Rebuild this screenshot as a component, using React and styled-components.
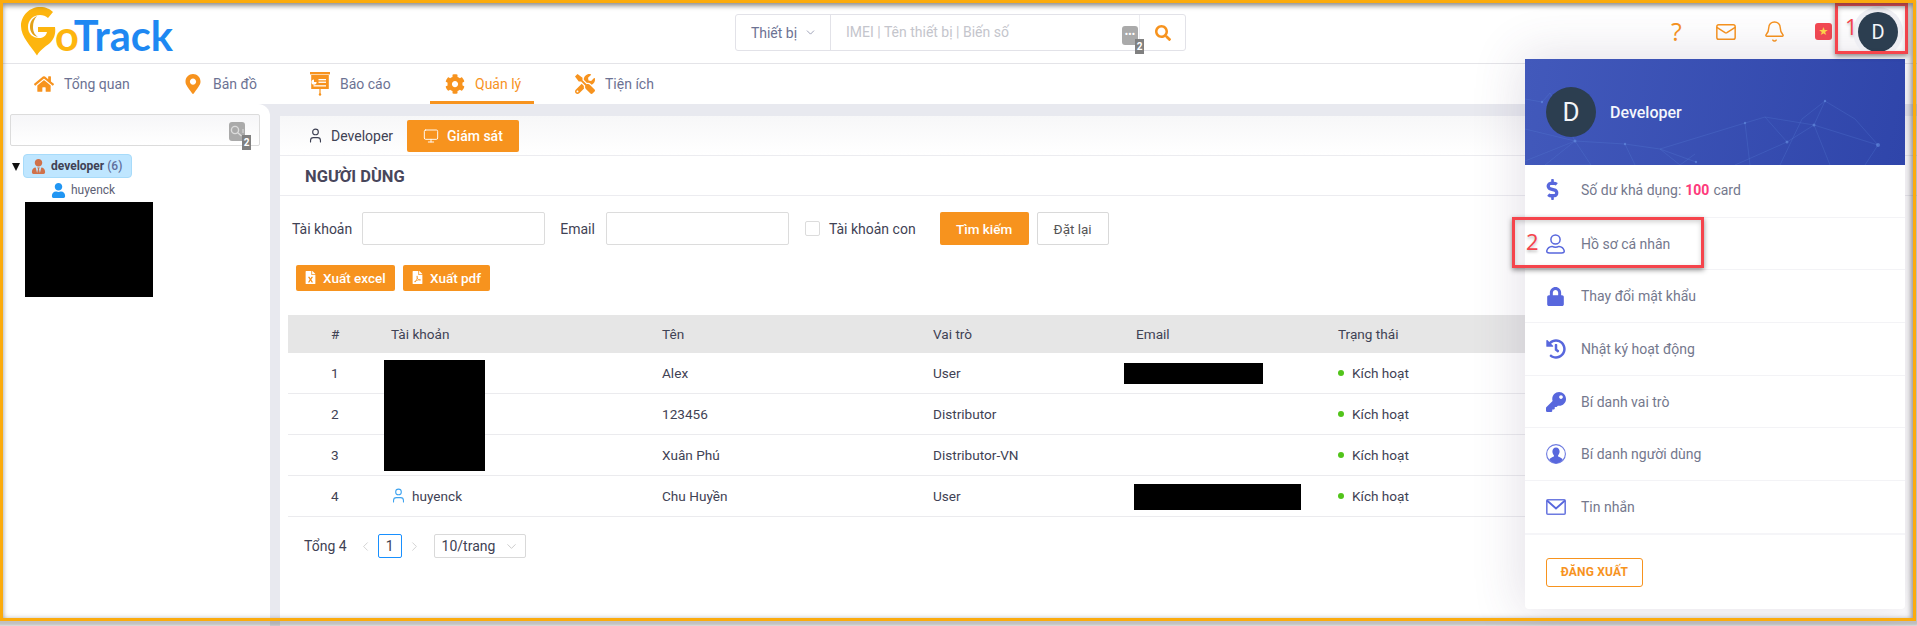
import React from "react";
import styled, { createGlobalStyle } from "styled-components";
import { FaHome, FaMapMarkerAlt, FaCog, FaTools, FaSearch, FaDollarSign, FaLock, FaHistory, FaKey, FaFileExcel, FaFilePdf, FaUser, FaUserTie } from "react-icons/fa";
import { Bell, ChevronDown, ChevronLeft, ChevronRight, Mail, Monitor, User } from "lucide-react";

const Global = createGlobalStyle`
  html, body { margin: 0; padding: 0; background: #fff; }
  * { box-sizing: border-box; }
  body { font-family: Roboto, "Liberation Sans", sans-serif; font-size: 13px; color: #3f4254; }
`;

const orange = "#f7931e";
const indigo = "#5867dd";

const Page = styled.div`
  position: relative; width: 1917px; height: 626px; overflow: hidden;
  display: flex; flex-direction: column; background: #fff;
`;
const Frame = styled.div`
  position: absolute; left: 0; top: 0; width: 1916px; height: 621px; z-index: 20; pointer-events: none;
  border: 3px solid #fbab0d;
  box-shadow: 0 2px 3px 3px rgba(90,90,90,.38), inset 0 3px 5px rgba(60,60,60,.5), inset -3px 0 5px rgba(60,60,60,.25);
`;
const Header = styled.header`
  height: 64px; flex: none; border-bottom: 1px solid #e4e4e8; padding: 3px 0 0 20px;
  display: flex; align-items: center; position: relative;
`;
const Logo = styled.div` width: 715px; display: flex; align-items: center; height: 50px; position: relative; margin-top: -3px; `;
const LogoPin = styled.svg` width: 37px; height: 49px; flex: none; margin-top: -1px; `;
const LogoText = styled.span`
  font-family: Lato, sans-serif; font-weight: 700; font-size: 41.5px; line-height: 1; margin: 8px 0 0 -2px; color: #1e88f2;
  & b { font-weight: 700; color: #fdb50e; }
`;
const SearchBar = styled.div`
  width: 451px; height: 37px; margin-top: -1px; border: 1px solid #e2e2e8; border-radius: 3px; display: flex; align-items: stretch;
`;
const SearchSelect = styled.div`
  width: 95px; border-right: 1px solid #e2e2e8; display: flex; align-items: center; justify-content: center; gap: 7px;
  color: #6c7293; font-size: 14px; padding-left: 2px;
`;
const SearchInput = styled.div`
  flex: 1; display: flex; align-items: center; padding: 0 0 2px 15px; color: #c4c5cc; font-size: 14px; position: relative; border-right: 1px solid #ececf0;
`;
const SearchBtn = styled.div` width: 45px; display: flex; align-items: center; justify-content: center; color: ${orange}; font-size: 16px; `;
const KbdIcon = styled.div`
  position: absolute; width: 16px; height: 19px; background: #aaa; border-radius: 3px; color: #fff;
  right: ${p => p.$right}px; top: ${p => p.$top}px; font-size: 9px; line-height: 17px; text-align: center; font-weight: 700; letter-spacing: .2px;
`;
const KbdBadge = styled.span`
  position: absolute; right: -6px; top: 13px; width: 9px; height: 15px; background: #808080; color: #fff; font-size: 10px; line-height: 15px; text-align: center; font-weight: 700; letter-spacing: 0;
`;
const TopIcons = styled.div`
  position: absolute; top: 0; left: 1652px; height: 63px; display: flex; align-items: center;
`;
const TopIcon = styled.div`
  width: 49px; display: flex; justify-content: center; align-items: center; color: ${orange};
  font-size: 24px; line-height: 1;
`;
const QuestionMark = styled.span` font-family: "Open Sans", sans-serif; font-size: 25px; color: ${orange}; `;
const Flag = styled.div`
  width: 17px; height: 17px; border-radius: 3px; background: #f44953; color: #ffd84a; font-size: 11px; line-height: 17px; text-align: center;
  font-family: "DejaVu Sans", sans-serif;
`;
const Avatar = styled.div`
  width: ${p => p.$size}px; height: ${p => p.$size}px; border-radius: 50%; background: #2c3e50; color: #f3f5f9; flex: none;
  display: flex; align-items: center; justify-content: center; font-size: ${p => p.$font}px; font-weight: 400;
`;
const TopAvatar = styled.div`
  position: absolute; left: 1853px; top: 7px; width: 50px; height: 50px; border-radius: 50%; background: #eeeef3;
  display: flex; align-items: center; justify-content: center; z-index: 6;
`;
const Nav = styled.nav`
  height: 40px; flex: none; display: flex; padding-left: 34px; align-items: stretch;
`;
const NavItem = styled.div`
  display: flex; align-items: center; gap: 10px; color: ${p => p.$active ? orange : "#6c7293"}; font-size: 14px;
  width: ${p => p.$w}px; position: relative; padding-left: ${p => p.$pl || 0}px;
  & svg { color: ${orange}; flex: none; }
  ${p => p.$active && `border-bottom: 3px solid ${orange}; padding-top: 3px;`}
`;
const Body = styled.div` flex: 1; display: flex; background: #e8e9ef; min-height: 0; `;
const Sidebar = styled.aside`
  width: 270px; flex: none; background: #fff; border-top-right-radius: 12px; padding: 10px 10px 0 10px; margin-right: 10px;
`;
const TreeSearch = styled.div`
  height: 32px; width: 250px; border: 1px solid #dcdcdc; border-radius: 2px; position: relative;
  background: linear-gradient(#f6f6f8, #fff);
`;
const TreeRoot = styled.div` display: flex; align-items: center; margin-top: 8px; `;
const Triangle = styled.div`
  width: 0; height: 0; border-left: 4.5px solid transparent; border-right: 4.5px solid transparent; border-top: 8px solid #111; margin: 1px 3px 0 2px;
`;
const RootNode = styled.div`
  width: 109px; height: 24px; background: #bfe6ff; border: 1px solid #a7dbfa; border-radius: 4px; display: flex; align-items: center; gap: 5px; padding-left: 7px;
  font-size: 12px; font-weight: 700; color: #3f4254; white-space: nowrap;
  & svg { color: #d0714a; flex: none; }
  & i { font-style: normal; font-weight: 500; color: #5f6f9c; }
`;
const TreeChild = styled.div`
  display: flex; align-items: center; gap: 5px; margin: 4px 0 0 41px; height: 16px; font-size: 12px; color: #5d5f75; & svg { color: #2196f3; }
`;
const Redact = styled.div`
  position: absolute; background: #000; left: ${p => p.$x}px; top: ${p => p.$y}px; width: ${p => p.$w}px; height: ${p => p.$h}px; z-index: 2;
`;
const Main = styled.main` flex: 1; margin-top: 12px; background: #fff; min-width: 0; `;
const Tabs = styled.div`
  height: 40px; display: flex; align-items: center; padding-left: 27px; border-bottom: 1px solid #ececf0;
  background: linear-gradient(#f7f7f8, #fff);
`;
const Tab = styled.div`
  display: flex; align-items: center; gap: ${p => p.$active ? 8 : 7}px; height: 32px; font-size: 14px; border-radius: 2px;
  color: ${p => p.$active ? "#fff" : "#3f4254"}; background: ${p => p.$active ? orange : "transparent"};
  padding: ${p => p.$active ? "0 16px" : "0 14px 0 0"};
  ${p => p.$active && "font-weight: 500;"}
`;
const Title = styled.div`
  height: 40px; display: flex; align-items: center; padding: 1px 0 0 25px; border-bottom: 1px solid #ececf0;
  font-size: 16.5px; font-weight: 700; color: #48465b;
`;
const Filters = styled.div` display: flex; align-items: center; padding: 16px 0 0 12px; height: 49px; `;
const FLabel = styled.span` font-size: 14px; color: #3f4254; margin-right: ${p => p.$mr}px; white-space: nowrap; `;
const FInput = styled.div` width: 183px; height: 33px; border: 1px solid #dcdcdc; border-radius: 2px; margin-right: ${p => p.$mr}px; `;
const Check = styled.div` width: 15px; height: 15px; border: 1px solid #dcdcdc; border-radius: 2px; margin-right: 9px; `;
const ActionBtn = styled.div`
  height: 33px; display: flex; align-items: center; justify-content: center; width: ${p => p.$w}px; margin-right: ${p => p.$mr || 0}px; border-radius: 2px; font-size: 13.5px; flex: none;
  ${p => p.$primary ? `background: ${orange}; color: #fff; font-weight: 500;` : "border: 1px solid #d9d9d9; color: #555;"}
`;
const Exports = styled.div` display: flex; gap: 8px; padding: 20px 0 0 16px; `;
const ExportBtn = styled.div`
  height: 26px; padding: 0 8px 1px; background: ${orange}; color: #fff; font-size: 13.5px; font-weight: 500; border-radius: 2px; display: flex; align-items: center; gap: 6px; width: ${p => p.$w}px;
  & svg { flex: none; }
`;
const TableWrap = styled.div` position: relative; margin: 24px 12px 0 8px; `;
const gridCols = "103px 271px 271px 203px 202px 1fr";
const Row = styled.div`
  display: grid; grid-template-columns: ${gridCols}; height: ${p => p.$head ? 38 : 41}px; align-items: center;
  font-size: 13.6px; color: #3f4254; padding-bottom: 1px;
  ${p => p.$head ? "background: #e6e6e6;" : "border-bottom: 1px solid #ebebee;"}
`;
const NumCell = styled.div` padding-left: 43px; `;
const UserCell = styled.div` display: flex; align-items: center; gap: 5px; margin-left: -1px; & svg { color: #3ea3ef; } `;
const Status = styled.div`
  display: flex; align-items: center; gap: 8px;
  &::before { content: ""; width: 6px; height: 6px; border-radius: 50%; background: #52c41a; }
`;
const Pager = styled.div` display: flex; align-items: center; height: 24px; padding-left: 24px; margin-top: 17px; font-size: 14px; color: #3f4254; `;
const Total = styled.span` margin-right: 11px; `;
const PageBtn = styled.div` width: 24px; height: 24px; border: 1px solid #1890ff; border-radius: 2px; display: flex; align-items: center; justify-content: center; margin: 0 5px; `;
const PerPage = styled.div`
  width: 92px; height: 24px; border: 1px solid #d9d9d9; border-radius: 2px; display: flex; align-items: center; justify-content: space-between; padding: 0 6px 0 7px; margin-left: 12px;
  & svg { color: #bbb; }
`;
const PagerArrow = styled.span` color: #c4c4c4; display: flex; `;

const Dropdown = styled.div`
  position: absolute; left: 1525px; top: 59px; width: 380px; height: 550px; background: #fff; border-radius: 0 0 4px 4px; z-index: 5;
  box-shadow: 0 0 50px 4px rgba(82,63,105,.16); display: flex; flex-direction: column;
`;
const DropHead = styled.div`
  height: 106px; flex: none; position: relative; overflow: hidden; display: flex; align-items: center; padding: 0 0 0 21px;
  background: linear-gradient(100deg, #4259bb, #2f45aa);
  color: #f4f6fc; font-size: 16px; font-weight: 500;
`;
const NetSvg = styled.svg` position: absolute; left: 0; bottom: 0; width: 380px; height: 106px; `;
const HeadContent = styled.div` position: relative; display: flex; align-items: center; gap: 14px; `;
const MenuItem = styled.div`
  height: 52.7px; flex: none; display: flex; align-items: center; padding: ${p => p.$first ? "0 0 2px 21px" : "0 0 0 21px"}; border-bottom: 1px solid #f3f3f6; color: #74788d; font-size: 14px;
  & strong { color: #fd397a; font-weight: 700; margin: 0 4px; }
`;
const MenuIcon = styled.div`
  width: 35px; flex: none; color: ${indigo}; display: flex; align-items: center;
  & > svg { margin-left: ${p => p.$shift ? -4 : 0}px; }
`;
const DropFoot = styled.div` border-top: 2px solid #f5f5f8; padding: 23px 0 0 21px; margin-top: -1px; `;
const Logout = styled.div`
  width: 97px; height: 29px; border: 1px solid ${orange}; border-radius: 3px; color: ${orange}; font-size: 12px; font-weight: 700;
  display: flex; align-items: center; justify-content: center; letter-spacing: .2px;
`;
const RedBox = styled.div`
  position: absolute; left: ${p => p.$x}px; top: ${p => p.$y}px; width: ${p => p.$w}px; height: ${p => p.$h}px; border: 3px solid #f5444c; z-index: 10; pointer-events: none;
  box-shadow: 0 2px 5px rgba(0,0,0,.45), inset 0 2px 5px rgba(0,0,0,.18);
`;
const RedNum = styled.span`
  position: absolute; left: ${p => p.$x}px; top: ${p => p.$y}px; color: #f5444c; font-size: 22px; line-height: 1; z-index: 11; font-family: "Open Sans", sans-serif;
  text-shadow: 0 2px 3px rgba(0,0,0,.25);
`;

const ReportIcon = () => (
  <svg width="20" height="24" viewBox="0 0 20 24" fill="#f7931e">
    <rect x="0" y="0" width="20" height="2.4" />
    <rect x="1.2" y="3" width="17.6" height="14" />
    <rect x="9.4" y="17" width="1.2" height="5" />
    <circle cx="10" cy="22.5" r="1.2" />
    <path d="M4 7.5a2.6 2.6 0 1 0 2.6 2.6H4z" fill="#fff" />
    <rect x="8.5" y="7" width="7.5" height="1.3" fill="#fff" />
    <rect x="8.5" y="9.6" width="7.5" height="1.3" fill="#fff" />
    <rect x="3.5" y="13.2" width="12.5" height="1.3" fill="#fff" />
  </svg>
);
const LogoMark = () => (
  <LogoPin viewBox="0 0 37 49">
    <path d="M17 48.5C11 39 1 30 1 19 1 8 10 0 20 0c6 0 10 2 13 5l-5 6c-2-2-5-3-8-3-7 0-12 5-12 12 0 7 5 11 11 11 4 0 7-2 8-6h-9v-5h17c1 7-1 12-5 16-5 4-10 7-13 12.5z" fill="#fdb50e" />
    <path d="M10 20c0-6 3-9 7-11-3 3-4 7-4 11 0 5 2 8 5 10-5-1-8-5-8-10z" fill="#e2a21a" />
  </LogoPin>
);
const Network = () => (
  <NetSvg viewBox="0 0 380 106" fill="none" stroke="#5d86dc" strokeOpacity=".4" strokeWidth=".6">
    <path d="M0 40 17 43 25 34 50 82 0 102M50 82 100 85 135 90 171 103M50 82 20 106 66 106 50 82M100 85 110 106M170 95 155 106 135 90 220 64 240 58 289 66 353 86 340 106M289 66 300 42 277 60 255 106M220 64 225 106M240 58 262 83 289 66 305 106M262 83 210 106M300 42 330 60 353 86M0 70 50 82" />
    <g fill="#6b96e6" fillOpacity=".55" stroke="none">
      <circle cx="50" cy="82" r="1.5" /><circle cx="100" cy="85" r="1.2" /><circle cx="171" cy="103" r="1.2" /><circle cx="220" cy="64" r="1.2" />
      <circle cx="262" cy="83" r="1.5" /><circle cx="289" cy="66" r="1.5" /><circle cx="353" cy="86" r="2" /><circle cx="300" cy="42" r="1.2" /><circle cx="17" cy="43" r="1.2" />
    </g>
  </NetSvg>
);
const FilledMail = () => (
  <svg width="20" height="16" viewBox="0 0 20 16" fill="none">
    <rect x="0.8" y="0.8" width="18.4" height="14.4" rx="1" stroke="#6d7ae0" strokeWidth="1.6" />
    <path d="M1 1.5 10 9.5 19 1.5" stroke="#5867dd" strokeWidth="1.8" />
  </svg>
);
const ProfileIcon = () => (
  <svg width="19" height="20" viewBox="0 0 19 20" fill="none" stroke="#5867dd" strokeWidth="1.5">
    <circle cx="9.5" cy="5.5" r="4.6" />
    <path d="M3.5 19h12c2.5 0 3-1 2.6-2.6C17.3 13.8 15 12.6 13 12.4c-2 1-5 1-7 0-2 .2-4.3 1.4-5.1 4C.5 18 1 19 3.5 19z" />
  </svg>
);
const UserRing = () => (
  <svg width="20" height="20" viewBox="0 0 20 20">
    <circle cx="10" cy="10" r="9.4" fill="none" stroke="#6d7ae0" strokeWidth="1.1" />
    <path d="M10 3.5c-2.3 0-3.6 1.9-3.6 4.1 0 1.5.6 2.9 1.5 3.7v1.1c-1.8.8-3.600 1.400-4.700 2.800C4.600 17.800 7.100 19.200 10 19.200s5.400-1.400 6.800-4c-1.100-1.400-2.900-2-4.700-2.800v-1.100c.9-.8 1.500-2.200 1.500-3.700 0-2.200-1.300-4.100-3.600-4.100z" fill="#5867dd" />
  </svg>
);
const TreeGlass = () => (
  <svg width="16" height="19" viewBox="0 0 16 19" fill="none" stroke="#dcdcdc" strokeWidth="1.4">
    <circle cx="6" cy="8" r="3.6" />
    <path d="M8.8 10.800 12.500 14" />
    <path d="M14 7v4" strokeWidth="1" />
  </svg>
);

const rows = [
  ["1", "", "Alex", "User"],
  ["2", "", "123456", "Distributor"],
  ["3", "", "Xuân Phú", "Distributor-VN"],
  ["4", "huyenck", "Chu Huyền", "User"],
];
const menu = [
  [<FaDollarSign size={21} />, <>Số dư khả dụng:<strong>100</strong>card</>],
  [<ProfileIcon />, "Hồ sơ cá nhân"],
  [<FaLock size={19} />, "Thay đổi mật khẩu"],
  [<FaHistory size={20} />, "Nhật ký hoạt động"],
  [<FaKey size={20} />, "Bí danh vai trò"],
  [<UserRing />, "Bí danh người dùng"],
  [<FilledMail />, "Tin nhắn"],
];

export default function App() {
  return (
    <Page>
      <Global />
      <Header>
        <Logo>
          <LogoMark />
          <LogoText><b>o</b>Track</LogoText>
        </Logo>
        <SearchBar>
          <SearchSelect>Thiết bị <ChevronDown size={13} strokeWidth={1.2} /></SearchSelect>
          <SearchInput>
            IMEI | Tên thiết bị | Biến số
            <KbdIcon $right={1} $top={11}>•••<KbdBadge>2</KbdBadge></KbdIcon>
          </SearchInput>
          <SearchBtn><FaSearch /></SearchBtn>
        </SearchBar>
        <TopIcons>
          <TopIcon><QuestionMark>?</QuestionMark></TopIcon>
          <TopIcon><Mail size={22} strokeWidth={1.6} /></TopIcon>
          <TopIcon><Bell size={23} strokeWidth={1.5} /></TopIcon>
          <TopIcon><Flag>★</Flag></TopIcon>
        </TopIcons>
        <TopAvatar><Avatar $size={40} $font={20}>D</Avatar></TopAvatar>
      </Header>
      <Nav>
        <NavItem $w={149}><FaHome size={20} />Tổng quan</NavItem>
        <NavItem $w={127}><FaMapMarkerAlt size={20} />Bản đồ</NavItem>
        <NavItem $w={120}><ReportIcon />Báo cáo</NavItem>
        <NavItem $active $w={104} $pl={15}><FaCog size={20} />Quản lý</NavItem>
        <NavItem $w={120} $pl={41}><FaTools size={20} />Tiện ích</NavItem>
      </Nav>
      <Body>
        <Sidebar>
          <TreeSearch><KbdIcon $right={14} $top={7}><TreeGlass /><KbdBadge>2</KbdBadge></KbdIcon></TreeSearch>
          <TreeRoot>
            <Triangle />
            <RootNode><FaUserTie size={15} /><span>developer <i>(6)</i></span></RootNode>
          </TreeRoot>
          <TreeChild><FaUser size={15} />huyenck</TreeChild>
          <Redact $x={25} $y={202} $w={128} $h={95} />
        </Sidebar>
        <Main>
          <Tabs>
            <Tab><User size={17} strokeWidth={1.6} />Developer</Tab>
            <Tab $active><Monitor size={16} strokeWidth={1.4} />Giám sát</Tab>
          </Tabs>
          <Title>NGƯỜI DÙNG</Title>
          <Filters>
            <FLabel $mr={10}>Tài khoản</FLabel><FInput $mr={15} />
            <FLabel $mr={11}>Email</FLabel><FInput $mr={16} />
            <Check /><FLabel $mr={24}>Tài khoản con</FLabel>
            <ActionBtn $primary $w={89} $mr={8}>Tìm kiếm</ActionBtn>
            <ActionBtn $w={72}>Đặt lại</ActionBtn>
          </Filters>
          <Exports>
            <ExportBtn $w={99}><FaFileExcel size={13} />Xuất excel</ExportBtn>
            <ExportBtn $w={87}><FaFilePdf size={13} />Xuất pdf</ExportBtn>
          </Exports>
          <TableWrap>
            <Row $head>
              <NumCell>#</NumCell><div>Tài khoản</div><div>Tên</div><div>Vai trò</div><div>Email</div><div>Trạng thái</div>
            </Row>
            {rows.map(r => (
              <Row key={r[0]}>
                <NumCell>{r[0]}</NumCell>
                <UserCell>{r[1] && <User size={17} strokeWidth={1.5} />}{r[1]}</UserCell>
                <div>{r[2]}</div><div>{r[3]}</div><div />
                <Status>Kích hoạt</Status>
              </Row>
            ))}
            <Redact $x={96} $y={45} $w={101} $h={111} />
            <Redact $x={836} $y={48} $w={139} $h={21} />
            <Redact $x={846} $y={169} $w={167} $h={26} />
          </TableWrap>
          <Pager>
            <Total>Tổng 4</Total>
            <PagerArrow><ChevronLeft size={15} strokeWidth={1.2} /></PagerArrow>
            <PageBtn>1</PageBtn>
            <PagerArrow><ChevronRight size={15} strokeWidth={1.2} /></PagerArrow>
            <PerPage>10/trang <ChevronDown size={15} strokeWidth={1.2} /></PerPage>
          </Pager>
        </Main>
      </Body>
      <Dropdown>
        <DropHead>
          <Network />
          <HeadContent><Avatar $size={50} $font={26}>D</Avatar>Developer</HeadContent>
        </DropHead>
        {menu.map(([icon, label], i) => (
          <MenuItem key={i} $first={i === 0}><MenuIcon $shift={i === 0}>{icon}</MenuIcon><span>{label}</span></MenuItem>
        ))}
        <DropFoot><Logout>ĐĂNG XUẤT</Logout></DropFoot>
      </Dropdown>
      <RedBox $x={1835} $y={3} $w={73} $h={51} />
      <RedNum $x={1845} $y={15}>1</RedNum>
      <RedBox $x={1512} $y={217} $w={192} $h={51} />
      <RedNum $x={1526} $y={230}>2</RedNum>
      <Frame />
    </Page>
  );
}
